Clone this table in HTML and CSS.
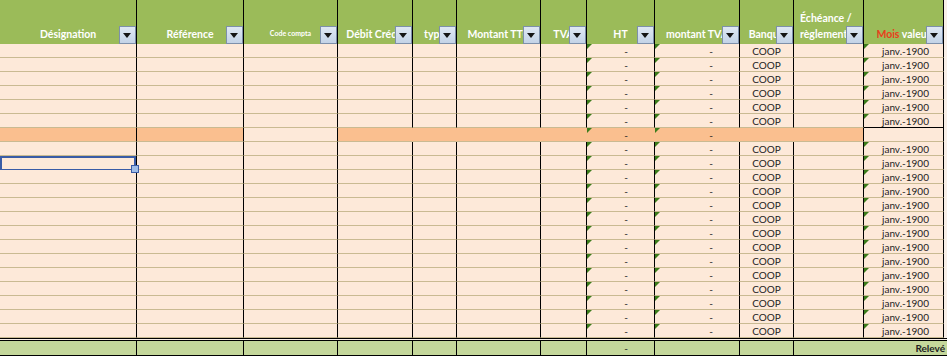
FILE: index.html
```html
<!DOCTYPE html>
<html lang="fr">
<head>
<meta charset="utf-8">
<title>Relevé</title>
<link rel="stylesheet" href="styles.css">
</head>
<body>
<div class="sheet">
  <div class="head">
    <div class="h"><span>Désignation</span><i class="dd"></i></div>
    <div class="h"><span>Référence</span><i class="dd"></i></div>
    <div class="h small"><span>Code compta</span><i class="dd"></i></div>
    <div class="h"><span>Débit Crédit</span><i class="dd"></i></div>
    <div class="h"><span>type</span><i class="dd"></i></div>
    <div class="h"><span>Montant TTC</span><i class="dd"></i></div>
    <div class="h"><span>TVA</span><i class="dd"></i></div>
    <div class="h"><span>HT</span><i class="dd"></i></div>
    <div class="h"><span>montant TVA</span><i class="dd"></i></div>
    <div class="h"><span>Banque</span><i class="dd"></i></div>
    <div class="h l"><span>Échéance /<br>règlement</span><i class="dd"></i></div>
    <div class="h"><span><em>Mois</em> valeur</span><i class="dd"></i></div>
  </div>

  <div class="row"><span></span><span></span><span></span><span></span><span></span><span></span><span></span><span class="n">-</span><span class="n">-</span><span class="b">COOP</span><span></span><span class="m">janv.-1900</span></div>
  <div class="row"><span></span><span></span><span></span><span></span><span></span><span></span><span></span><span class="n">-</span><span class="n">-</span><span class="b">COOP</span><span></span><span class="m">janv.-1900</span></div>
  <div class="row"><span></span><span></span><span></span><span></span><span></span><span></span><span></span><span class="n">-</span><span class="n">-</span><span class="b">COOP</span><span></span><span class="m">janv.-1900</span></div>
  <div class="row"><span></span><span></span><span></span><span></span><span></span><span></span><span></span><span class="n">-</span><span class="n">-</span><span class="b">COOP</span><span></span><span class="m">janv.-1900</span></div>
  <div class="row"><span></span><span></span><span></span><span></span><span></span><span></span><span></span><span class="n">-</span><span class="n">-</span><span class="b">COOP</span><span></span><span class="m">janv.-1900</span></div>
  <div class="row"><span></span><span></span><span></span><span></span><span></span><span></span><span></span><span class="n">-</span><span class="n">-</span><span class="b">COOP</span><span></span><span class="m e">janv.-1900</span></div>
  <div class="row"><span class="o"></span><span class="o"></span><span></span><span class="o nb"></span><span class="o nb"></span><span class="o nb"></span><span class="o nb"></span><span class="o n nb">-</span><span class="o n nb">-</span><span class="o nb"></span><span class="o"></span><span></span></div>
  <div class="row"><span></span><span></span><span></span><span></span><span></span><span></span><span></span><span class="n">-</span><span class="n">-</span><span class="b">COOP</span><span></span><span class="m">janv.-1900</span></div>
  <div class="row"><span class="sel"></span><span></span><span></span><span></span><span></span><span></span><span></span><span class="n">-</span><span class="n">-</span><span class="b">COOP</span><span></span><span class="m">janv.-1900</span></div>
  <div class="row"><span></span><span></span><span></span><span></span><span></span><span></span><span></span><span class="n">-</span><span class="n">-</span><span class="b">COOP</span><span></span><span class="m">janv.-1900</span></div>
  <div class="row"><span></span><span></span><span></span><span></span><span></span><span></span><span></span><span class="n">-</span><span class="n">-</span><span class="b">COOP</span><span></span><span class="m">janv.-1900</span></div>
  <div class="row"><span></span><span></span><span></span><span></span><span></span><span></span><span></span><span class="n">-</span><span class="n">-</span><span class="b">COOP</span><span></span><span class="m">janv.-1900</span></div>
  <div class="row"><span></span><span></span><span></span><span></span><span></span><span></span><span></span><span class="n">-</span><span class="n">-</span><span class="b">COOP</span><span></span><span class="m">janv.-1900</span></div>
  <div class="row"><span></span><span></span><span></span><span></span><span></span><span></span><span></span><span class="n">-</span><span class="n">-</span><span class="b">COOP</span><span></span><span class="m">janv.-1900</span></div>
  <div class="row"><span></span><span></span><span></span><span></span><span></span><span></span><span></span><span class="n">-</span><span class="n">-</span><span class="b">COOP</span><span></span><span class="m">janv.-1900</span></div>
  <div class="row"><span></span><span></span><span></span><span></span><span></span><span></span><span></span><span class="n">-</span><span class="n">-</span><span class="b">COOP</span><span></span><span class="m">janv.-1900</span></div>
  <div class="row"><span></span><span></span><span></span><span></span><span></span><span></span><span></span><span class="n">-</span><span class="n">-</span><span class="b">COOP</span><span></span><span class="m">janv.-1900</span></div>
  <div class="row"><span></span><span></span><span></span><span></span><span></span><span></span><span></span><span class="n">-</span><span class="n">-</span><span class="b">COOP</span><span></span><span class="m">janv.-1900</span></div>
  <div class="row"><span></span><span></span><span></span><span></span><span></span><span></span><span></span><span class="n">-</span><span class="n">-</span><span class="b">COOP</span><span></span><span class="m">janv.-1900</span></div>
  <div class="row"><span></span><span></span><span></span><span></span><span></span><span></span><span></span><span class="n">-</span><span class="n">-</span><span class="b">COOP</span><span></span><span class="m">janv.-1900</span></div>
  <div class="row"><span></span><span></span><span></span><span></span><span></span><span></span><span></span><span class="n">-</span><span class="n">-</span><span class="b">COOP</span><span></span><span class="m">janv.-1900</span></div>

  <div class="foot"><span></span><span></span><span></span><span></span><span></span><span></span><span></span><span class="n">-</span><span></span><span></span><span class="r">Relevé</span></div>
</div>
</body>
</html>
```

FILE: styles.css
```css
* {
  box-sizing: border-box;
  margin: 0;
  padding: 0;
}

body {
  width: 947px;
  height: 356px;
  overflow: hidden;
  background: #f8efe8;
  font-family: Lato, "Liberation Sans", sans-serif;
}

.sheet {
  width: 947px;
}

.head,
.row {
  display: grid;
  grid-template-columns: 137px 107px 94px 75px 44px 84px 46px 68px 85px 54px 70px 80px;
  width: 944px;
}

.head {
  height: 44px;
}

.h {
  position: relative;
  background: #9bbb59;
  border-right: 1px solid #000;
  color: #fff;
  font-weight: 700;
  font-size: 10.5px;
  line-height: 13px;
  white-space: nowrap;
  overflow: hidden;
  display: flex;
  align-items: flex-end;
  justify-content: center;
  padding-bottom: 3px;
}

.h.small {
  font-size: 7px;
  line-height: 10px;
  padding-bottom: 6px;
}

.h.l {
  justify-content: flex-start;
  padding-left: 6px;
  line-height: 16px;
  padding-bottom: 2px;
}

.h em {
  font-style: normal;
  color: #e8401c;
}

.dd {
  position: absolute;
  right: 0;
  bottom: 0;
  width: 17px;
  height: 18px;
  background: linear-gradient(#dfe8f3, #c3d3e7);
  border: 1px solid #7d90aa;
}

.dd::after {
  content: "";
  position: absolute;
  left: 3px;
  top: 6px;
  border-left: 4px solid transparent;
  border-right: 4px solid transparent;
  border-top: 5px solid #151515;
}

.row > span {
  position: relative;
  display: block;
  height: 14px;
  background: #fde9d9;
  border-right: 1px solid #000;
  border-bottom: 1px solid #c9ba92;
  font-size: 10px;
  line-height: 14px;
  color: #222;
  white-space: nowrap;
}

.row > .o {
  background: #fabf8f;
}

.row > .nb {
  border-right-color: #fabf8f;
}

.row > .e {
  border-bottom-color: #000;
}

.n {
  text-align: right;
  padding-right: 26px;
}

.row > .n::before,
.row > .m::before {
  content: "";
  position: absolute;
  left: 0;
  top: 0;
  border-top: 5px solid #3c7d1c;
  border-right: 5px solid transparent;
}

.b {
  text-align: center;
}

.m {
  text-align: center;
  padding-left: 4px;
}

.sel::after {
  content: "";
  position: absolute;
  left: 0;
  top: 0;
  right: 0;
  bottom: -2px;
  border: 2px solid #3a5ca6;
}

.sel::before {
  content: "";
  position: absolute;
  right: -3px;
  bottom: -4px;
  width: 6px;
  height: 6px;
  background: #9fbde8;
  border: 1px solid #3a5ca6;
  z-index: 2;
}

.foot {
  display: grid;
  grid-template-columns: 137px 107px 94px 75px 44px 84px 46px 68px 85px 54px 1fr;
  width: 947px;
  height: 18px;
  border-top: 3px double #000;
}

.foot > span {
  display: block;
  background: #c4d79b;
  border-right: 1px solid #000;
  border-bottom: 1px solid #000;
  font-size: 10px;
  line-height: 14px;
  color: #222;
}

.foot > .r {
  border-right: none;
  text-align: right;
  font-weight: 700;
  padding-right: 2px;
}
```
